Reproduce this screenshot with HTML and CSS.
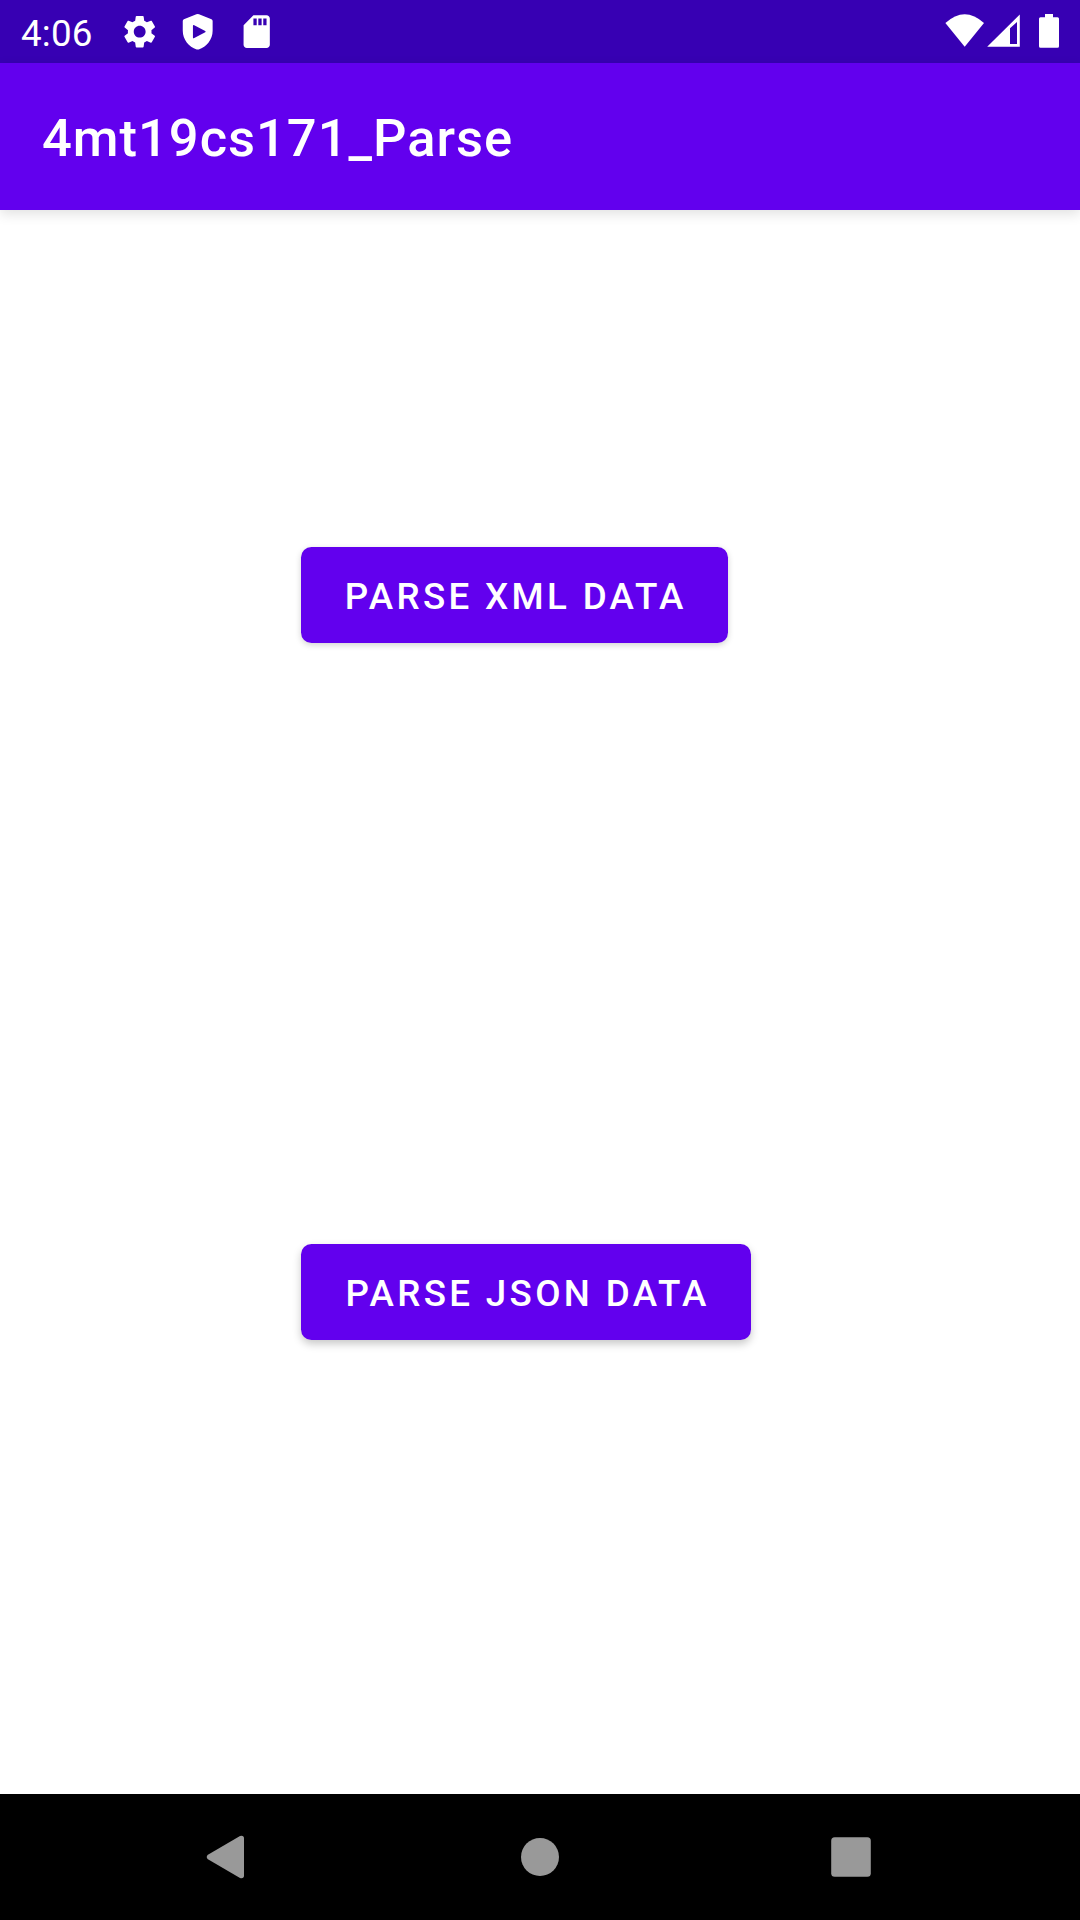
FILE: index.html
```html
<!DOCTYPE html>
<html lang="en">
<head>
<meta charset="utf-8">
<title>4mt19cs171_Parse</title>
<link rel="stylesheet" href="styles.css">
</head>
<body>
<div class="screen">
  <header class="status-bar">
    <span class="clock">4:06</span>
    <div class="notifications">
      <svg class="icon" viewBox="0 0 24 24"><path d="M19.14 12.94c.04-.3.06-.61.06-.94 0-.32-.02-.64-.07-.94l2.03-1.58c.18-.14.23-.41.12-.61l-1.92-3.32c-.12-.22-.37-.29-.59-.22l-2.39.96c-.5-.38-1.03-.7-1.62-.94l-.36-2.54c-.04-.24-.24-.41-.48-.41h-3.84c-.24 0-.43.17-.47.41l-.36 2.54c-.59.24-1.13.57-1.62.94l-2.39-.96c-.22-.08-.47 0-.59.22L2.74 8.87c-.12.21-.08.47.12.61l2.03 1.58c-.05.3-.09.63-.09.94s.02.64.07.94l-2.03 1.58c-.18.14-.23.41-.12.61l1.92 3.32c.12.22.37.29.59.22l2.39-.96c.5.38 1.03.7 1.62.94l.36 2.54c.05.24.24.41.48.41h3.84c.24 0 .44-.17.47-.41l.36-2.54c.59-.24 1.13-.56 1.62-.94l2.39.96c.22.08.47 0 .59-.22l1.92-3.32c.12-.22.07-.47-.12-.61l-2.01-1.58zM12 15.6c-1.98 0-3.6-1.62-3.6-3.6s1.62-3.6 3.6-3.6 3.6 1.62 3.6 3.6-1.62 3.6-3.6 3.6z"/></svg>
      <svg class="icon" viewBox="0 0 24 24"><path fill-rule="evenodd" d="M12 1.2Q12.4 1.2 12.8 1.4L20.4 4.4Q21.1 4.7 21.1 5.5V11.5C21.1 16.8 17.4 21.4 12.6 22.8Q12 23 11.4 22.8C6.6 21.4 2.9 16.8 2.9 11.5V5.5Q2.9 4.7 3.6 4.4L11.2 1.4Q11.6 1.2 12 1.2ZM9.1 8.5V15.5Q9.1 16.3 9.9 15.9L16.6 12.4Q17.1 12 16.6 11.6L9.9 8.1Q9.1 7.7 9.1 8.5Z"/></svg>
      <svg class="icon" viewBox="0 0 24 24"><path d="M18 2h-8L4.02 8 4 20c0 1.1.9 2 2 2h12c1.1 0 2-.9 2-2V4c0-1.1-.9-2-2-2zm-6 6h-2V4h2v4zm3 0h-2V4h2v4zm3 0h-2V4h2v4z"/></svg>
    </div>
    <svg class="system-icons" viewBox="0 0 116 36">
      <path d="M.4 9Q19.7-8.6 39 9L19.7 32.7Z"/>
      <path fill-rule="evenodd" d="M42.200 32.700L74.800 .5V32.700ZM65 14.300V30H72V8Z"/>
      <path d="M100 0H108V3.300H112.500Q114 3.300 114 4.800V32.200Q114 33.700 112.500 33.700H95.500Q94 33.700 94 32.200V4.800Q94 3.300 95.500 3.300H100Z"/>
    </svg>
  </header>
  <div class="app-bar"><h1 class="title">4mt19cs171_Parse</h1></div>
  <main class="content">
    <button class="action" type="button">PARSE XML DATA</button>
    <button class="action action-raised" type="button">PARSE JSON DATA</button>
  </main>
  <nav class="nav-bar">
    <svg class="nav-icon" viewBox="0 0 60 60"><path d="M8.500 28L41 9Q45 8 45 11.500V48.500Q45 52 41 51L8.500 32Q6.800 30 8.500 28Z"/></svg>
    <svg class="nav-icon" viewBox="0 0 60 60"><circle cx="30" cy="30" r="19"/></svg>
    <svg class="nav-icon" viewBox="0 0 60 60"><rect x="10.200" y="10.200" width="39.600" height="39.600" rx="3.500"/></svg>
  </nav>
</div>
</body>
</html>
```
FILE: styles.css
```css
body {
  margin: 0;
  font-family: Roboto, sans-serif;
}

.screen {
  display: flex;
  flex-direction: column;
  width: 1080px;
  height: 1920px;
  overflow: hidden;
  background: #fff;
}

.status-bar {
  display: flex;
  align-items: center;
  box-sizing: border-box;
  height: 63px;
  padding: 0 19px 0 21px;
  background: #3700b3;
  color: #fff;
  fill: #fff;
}

.clock {
  width: 99.3px;
  padding-top: 5px;
  font-size: 36.75px;
  line-height: 44px;
  letter-spacing: 0.2px;
}

.notifications {
  display: flex;
  gap: 18.8px;
}

.icon {
  width: 39.4px;
  height: 39.4px;
}

.system-icons {
  width: 116px;
  height: 36px;
  margin-left: auto;
}

.app-bar {
  display: flex;
  align-items: center;
  box-sizing: border-box;
  position: relative;
  height: 147px;
  padding: 3px 0 0 42px;
  background: #6200ee;
  color: #fff;
  box-shadow: 0 4px 12px rgba(0, 0, 0, 0.12);
}

.title {
  margin: 0;
  font-size: 52.5px;
  font-weight: 500;
  line-height: 62px;
  letter-spacing: 0.98px;
}

.content {
  display: flex;
  flex: 1;
  flex-direction: column;
  align-items: flex-start;
  gap: 601px;
  padding: 337px 0 0 301px;
}

.action {
  height: 96px;
  padding: 3px 41.5px 0 43.7px;
  border: 0;
  border-radius: 10.5px;
  background: #6200ee;
  box-shadow: 0 2px 6px rgba(0, 0, 0, 0.18);
  color: #fff;
  font: 500 36.75px/44px Roboto, sans-serif;
  letter-spacing: 3.33px;
  white-space: nowrap;
}

.action-raised {
  padding-left: 44.5px;
  box-shadow: 0 4px 8px rgba(0, 0, 0, 0.22);
}

.nav-bar {
  display: flex;
  align-items: center;
  justify-content: center;
  gap: 251px;
  height: 126px;
  background: #000;
  fill: #999;
}

.nav-icon {
  width: 60px;
  height: 60px;
}
```
